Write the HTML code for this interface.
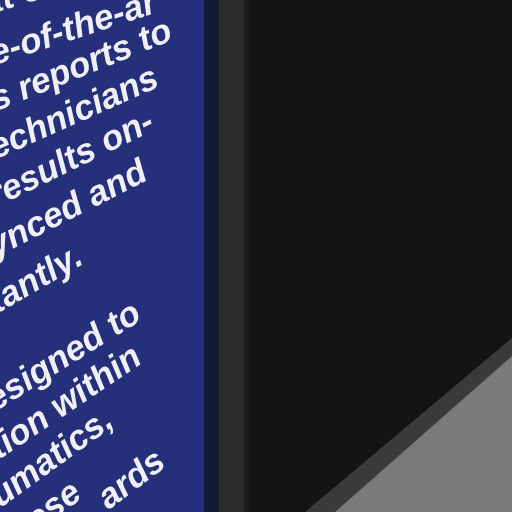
<!DOCTYPE html>
<html><head><style>
html,body{margin:0;padding:0;width:512px;height:512px;overflow:hidden}
body{position:relative;background:#141414}
.blue{position:absolute;left:0;top:0;width:204px;height:512px;background:#26307a;overflow:hidden}
.n{position:absolute;left:204px;top:0;width:15px;height:512px;background:#141a33}
.f{position:absolute;left:219px;top:0;width:30px;height:512px;background:#2b2b2b}
.f2{position:absolute;left:244px;top:0;width:6px;height:512px;background:#1c1c1c}
.t{position:absolute;left:0;color:#eef0f6;font-family:"Liberation Sans",sans-serif;font-style:italic;font-weight:bold;font-size:35px;white-space:nowrap;transform-origin:0 100%;line-height:1}
svg{position:absolute;left:0;top:0;display:block}
</style></head><body>
<div class="blue">
<div class="t" style="left:-12px;top:-14px;transform:rotate(-17deg)">at c</div>
<div class="t" style="left:-4px;top:36px;transform:rotate(-18deg)">e-of-the-ar</div>
<div class="t" style="left:-2px;top:82px;transform:rotate(-22deg)">s reports to</div>
<div class="t" style="left:-2px;top:130px;transform:rotate(-24deg)">echnicians</div>
<div class="t" style="left:-2px;top:178px;transform:rotate(-26deg)">results on-</div>
<div class="t" style="left:-2px;top:228px;transform:rotate(-27deg)">ynced and</div>
<div class="t" style="left:0px;top:284px;transform:rotate(-30deg)">tantly.</div>
<div class="t" style="left:-2px;top:382px;transform:rotate(-32deg)">esigned to</div>
<div class="t" style="left:2px;top:430px;transform:rotate(-34deg)">tion within</div>
<div class="t" style="left:4px;top:478px;transform:rotate(-36deg)">umatics,</div>
<div class="t" style="left:14px;top:522px;transform:rotate(-37deg)">these</div>
<div class="t" style="left:112px;top:480px;transform:rotate(-37deg)">ards</div>
</div>
<div class="n"></div><div class="f"></div><div class="f2"></div>
<svg width="512" height="512">
<polygon points="305,512 512,338 512,512" fill="#3a3a3a"/>
<polygon points="335,512 512,356 512,512" fill="#7a7a7a"/>
</svg>
</body></html>
